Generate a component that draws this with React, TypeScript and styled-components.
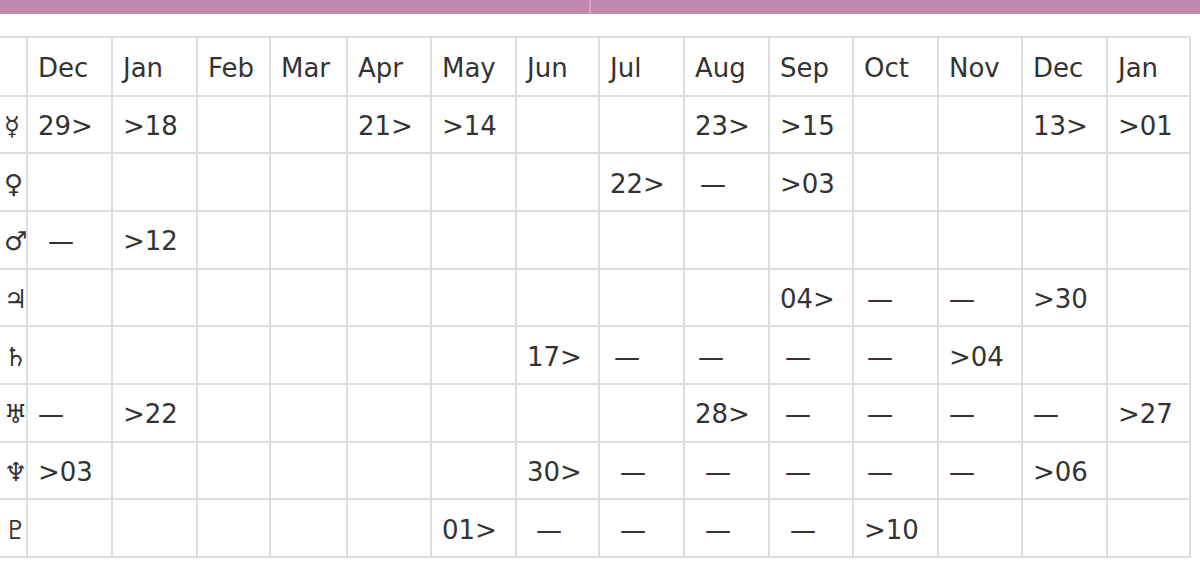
import styled, { createGlobalStyle } from 'styled-components';

const GlobalStyle = createGlobalStyle`
  html, body {
    margin: 0;
    padding: 0;
    background: #ffffff;
    overflow: hidden;
  }
  body {
    font-family: "DejaVu Sans", Verdana, sans-serif;
    color: #333333;
  }
`;

// Top nav strip

const NavStrip = styled.div`
  display: flex;
  height: 14px;
  background-color: #c087b0;
`;

const NavSegment = styled.div`
  height: 100%;
  flex: ${(props: { $grow: number }) => props.$grow};
  & + & {
    border-left: 2px solid #d2a6c6;
  }
`;

// Table

const Page = styled.div`
  padding-top: 22px;
  width: 1200px;
  overflow: hidden;
`;

const Table = styled.table`
  margin-left: -8px;
  border-collapse: collapse;
  table-layout: fixed;
  width: 1197px;
  font-family: "DejaVu Sans", Verdana, sans-serif;
  font-size: 26px;
  color: #333333;
`;

const Col = styled.col<{ $w: number }>`
  width: ${(p) => p.$w}px;
`;

const HeadRow = styled.tr`
  height: 58.5px;
`;

const BodyRow = styled.tr`
  height: 57.7px;
`;

const Cell = styled.td`
  border: 2px solid #dddddd;
  padding: 3px 0 0 10px;
  text-align: left;
  vertical-align: middle;
  white-space: nowrap;
  line-height: 30px;
`;

const HeadCell = styled(Cell).attrs({ as: 'th' })`
  font-weight: normal;
`;

const SymbolCell = styled(Cell)`
  padding-left: 10px;
  font-size: 26px;
  overflow: hidden;
`;

const Dash = styled.span<{ $indent: number }>`
  padding-left: ${(p) => p.$indent}px;
`;

const widths = [34, 85, 85, 73, 77, 84, 85, 83, 85, 85, 84, 85, 84, 85, 83];

const months = [
  'Dec', 'Jan', 'Feb', 'Mar', 'Apr', 'May', 'Jun',
  'Jul', 'Aug', 'Sep', 'Oct', 'Nov', 'Dec', 'Jan',
];

type Row = { symbol: string; cells: Record<number, string> };

// "—N" means a dash shifted right by N px
const rows: Row[] = [
  {
    symbol: '\u263F',
    cells: { 0: '29>', 1: '>18', 4: '21>', 5: '>14', 8: '23>', 9: '>15', 12: '13>', 13: '>01' },
  },
  { symbol: '\u2640\uFE0E', cells: { 7: '22>', 8: '—5', 9: '>03' } },
  { symbol: '\u2642\uFE0E', cells: { 0: '—10', 1: '>12' } },
  { symbol: '\u2643', cells: { 9: '04>', 10: '—3', 11: '—0', 12: '>30' } },
  {
    symbol: '\u2644',
    cells: { 6: '17>', 7: '—4', 8: '—3', 9: '—5', 10: '—3', 11: '>04' },
  },
  {
    symbol: '\u2645',
    cells: { 0: '—0', 1: '>22', 8: '28>', 9: '—5', 10: '—3', 11: '—0', 12: '—0', 13: '>27' },
  },
  {
    symbol: '\u2646',
    cells: { 0: '>03', 6: '30>', 7: '—10', 8: '—10', 9: '—5', 10: '—3', 11: '—0', 12: '>06' },
  },
  { symbol: '\u2647', cells: { 5: '01>', 6: '—9', 7: '—10', 8: '—10', 9: '—10', 10: '>10' } },
];

function renderValue(value?: string) {
  if (!value) return null;
  if (value.startsWith('—')) {
    return <Dash $indent={Number(value.slice(1))}>—</Dash>;
  }
  return value;
}

export default function App() {
  return (
    <>
      <GlobalStyle />
      <NavStrip>
        <NavSegment $grow={589} />
        <NavSegment $grow={609} />
      </NavStrip>
      <Page>
        <Table>
          <colgroup>
            {widths.map((w, i) => (
              <Col key={i} $w={w} />
            ))}
          </colgroup>
          <thead>
            <HeadRow>
              <HeadCell />
              {months.map((m, i) => (
                <HeadCell key={i}>{m}</HeadCell>
              ))}
            </HeadRow>
          </thead>
          <tbody>
            {rows.map((row, r) => (
              <BodyRow key={r}>
                <SymbolCell>{row.symbol}</SymbolCell>
                {months.map((_, c) => (
                  <Cell key={c}>{renderValue(row.cells[c])}</Cell>
                ))}
              </BodyRow>
            ))}
          </tbody>
        </Table>
      </Page>
    </>
  );
}
